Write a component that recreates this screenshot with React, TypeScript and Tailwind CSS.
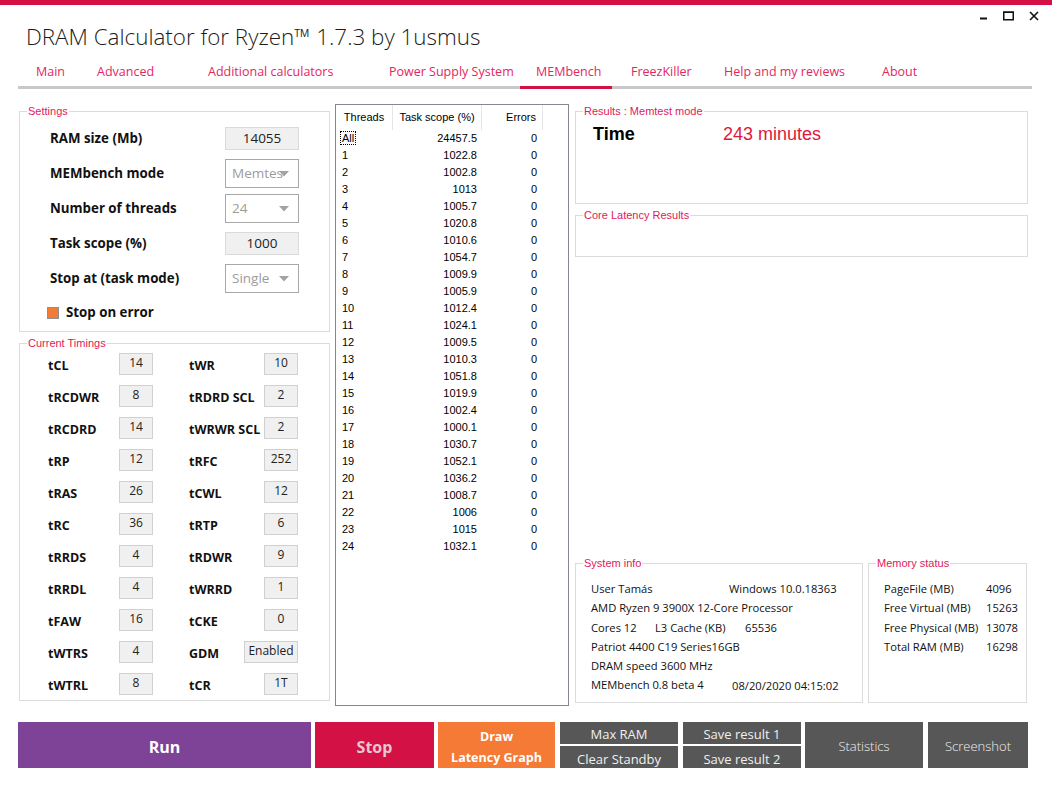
import React from "react";

const seg = "font-['Open_Sans',sans-serif]";
const ms = "font-['Liberation_Sans',Arial,sans-serif]";

const tabs = [
  { name: "Main", w: 61 },
  { name: "Advanced", w: 111 },
  { name: "Additional calculators", w: 181 },
  { name: "Power Supply System", w: 147 },
  { name: "MEMbench", w: 95 },
  { name: "FreezKiller", w: 93 },
  { name: "Help and my reviews", w: 158 },
  { name: "About", w: 60 },
];

const settingsRows = [
  { label: "RAM size (Mb)", kind: "input", value: "14055" },
  { label: "MEMbench mode", kind: "select", value: "Memtes" },
  { label: "Number of threads", kind: "select", value: "24" },
  { label: "Task scope (%)", kind: "input", value: "1000" },
  { label: "Stop at (task mode)", kind: "select", value: "Single" },
];

const timings: [string, string, string, string][] = [
  ["tCL", "14", "tWR", "10"],
  ["tRCDWR", "8", "tRDRD SCL", "2"],
  ["tRCDRD", "14", "tWRWR SCL", "2"],
  ["tRP", "12", "tRFC", "252"],
  ["tRAS", "26", "tCWL", "12"],
  ["tRC", "36", "tRTP", "6"],
  ["tRRDS", "4", "tRDWR", "9"],
  ["tRRDL", "4", "tWRRD", "1"],
  ["tFAW", "16", "tCKE", "0"],
  ["tWTRS", "4", "GDM", "Enabled"],
  ["tWTRL", "8", "tCR", "1T"],
];

const threads = [
  ["All", "24457.5"],
  ["1", "1022.8"],
  ["2", "1002.8"],
  ["3", "1013"],
  ["4", "1005.7"],
  ["5", "1020.8"],
  ["6", "1010.6"],
  ["7", "1054.7"],
  ["8", "1009.9"],
  ["9", "1005.9"],
  ["10", "1012.4"],
  ["11", "1024.1"],
  ["12", "1009.5"],
  ["13", "1010.3"],
  ["14", "1051.8"],
  ["15", "1019.9"],
  ["16", "1002.4"],
  ["17", "1000.1"],
  ["18", "1030.7"],
  ["19", "1052.1"],
  ["20", "1036.2"],
  ["21", "1008.7"],
  ["22", "1006"],
  ["23", "1015"],
  ["24", "1032.1"],
];

const memStatus = [
  ["PageFile (MB)", "4096"],
  ["Free Virtual (MB)", "15263"],
  ["Free Physical (MB)", "13078"],
  ["Total RAM (MB)", "16298"],
];

function Group({ title, className, children }: { title: string; className?: string; children?: React.ReactNode }) {
  return (
    <fieldset className={`border border-[#dcdcdc] ${className ?? ""}`}>
      <legend className={`ml-[7px] px-[1px] text-[11px] leading-[14px] text-[#e2185b] ${ms}`}>{title}</legend>
      {children}
    </fieldset>
  );
}

function Arrow() {
  return (
    <svg width="10" height="6" viewBox="0 0 10 6" className="absolute right-[9px] top-[11px]">
      <path d="M0 0 H10 L5 5.5 Z" fill="#a2a2a2" />
    </svg>
  );
}

function WindowControls() {
  return (
    <div className="absolute top-[11px] right-[13px] flex items-start gap-[15px]">
      <svg width="9" height="10" viewBox="0 0 9 10">
        <rect x="1" y="6.5" width="7" height="2" fill="#111" />
      </svg>
      <svg width="11" height="10" viewBox="0 0 11 10">
        <rect x="0.75" y="1.25" width="9.5" height="7.5" fill="none" stroke="#111" strokeWidth="1.5" />
        <rect x="0" y="0.5" width="11" height="1.5" fill="#111" />
      </svg>
      <svg width="10" height="10" viewBox="0 0 10 10">
        <path d="M1 1 L9 9 M9 1 L1 9" stroke="#111" strokeWidth="1.6" />
      </svg>
    </div>
  );
}

const grayBtn = "bg-[#575757] text-[#f0f0f0] text-[13px]";

export default function App() {
  return (
    <div className={`relative w-[1052px] h-[791px] bg-white overflow-hidden ${seg}`}>
      <div className="h-[5px] bg-[#d31145]" />
      <WindowControls />

      <div className="pl-[26px] pt-[17px] text-[22.4px] font-light leading-[30px] text-[#1b1b1b]">
        DRAM Calculator for Ryzen™ 1.7.3 by 1usmus
      </div>

      <div className="mt-[12px] pl-[36px] flex text-[12.5px] leading-[16px] text-[#e3265f]">
        {tabs.map((t) => (
          <div key={t.name} style={{ width: t.w }} className="shrink-0 whitespace-nowrap">
            {t.name}
          </div>
        ))}
      </div>

      <div className="mt-[6px] ml-[18px] flex h-[3px]">
        <div className="w-[502px] bg-[#c8c8c8]" />
        <div className="w-[92px] bg-[#d31145]" />
        <div className="w-[420px] bg-[#c8c8c8]" />
      </div>

      <div className="mt-[15px] ml-[19px] flex h-[602px]">
        {/* left column */}
        <div className="w-[311px] flex flex-col gap-[4px]">
          <Group title="Settings" className="h-[228px]">
            <div className="pt-[3px] pl-[30px] pr-[30px]">
              {settingsRows.map((r) => (
                <div key={r.label} className="h-[35px] flex items-center justify-between">
                  <span className="text-[13.3px] font-bold text-[#111]">{r.label}</span>
                  {r.kind === "input" ? (
                    <div className="w-[74px] h-[23px] bg-[#f0f0f0] border border-[#dadada] text-center text-[13.5px] leading-[21px] text-[#222]">
                      {r.value}
                    </div>
                  ) : (
                    <div className="relative w-[74px] h-[29px] bg-white border border-[#a8a8a8] overflow-hidden">
                      <span className="pl-[6px] text-[13.5px] leading-[27px] text-[#9c9c9c] whitespace-nowrap">{r.value}</span>
                      <Arrow />
                    </div>
                  )}
                </div>
              ))}
              <div className="h-[33px] flex items-center -ml-[3px] gap-[7px]">
                <div className="w-[12px] h-[12px] border border-[#8f8f8f] bg-[#f47b36]" />
                <span className="text-[13.3px] font-bold text-[#111]">Stop on error</span>
              </div>
            </div>
          </Group>

          <Group title="Current Timings" className="h-[365px]">
            <div className="pl-[28px]">
              {timings.map(([l, lv, r, rv]) => (
                <div key={l} className="h-[32px] flex items-center">
                  <span className="w-[71px] text-[12.5px] font-bold text-[#111] whitespace-nowrap">{l}</span>
                  <div className="w-[34px] h-[22px] mb-[4px] bg-[#f0f0f0] border border-[#d0d0d0] text-center text-[12px] leading-[17px] text-[#222]">
                    {lv}
                  </div>
                  <div className="ml-[36px] w-[109px] flex items-center justify-between">
                    <span className="text-[12.5px] font-bold text-[#111] whitespace-nowrap">{r}</span>
                    <div
                      className={`${rv === "Enabled" ? "w-[54px]" : "w-[34px]"} h-[22px] mb-[4px] bg-[#f0f0f0] border border-[#d0d0d0] text-center text-[12px] leading-[17px] text-[#222]`}
                    >
                      {rv}
                    </div>
                  </div>
                </div>
              ))}
            </div>
          </Group>
        </div>

        {/* thread list */}
        <div className={`ml-[5px] w-[234px] border border-[#828790] bg-white ${ms} text-[11px] text-black`}>
          <div className="flex h-[25px]">
            <div className="w-[57px] text-center leading-[25px] border-r border-[#e5e5e5]">Threads</div>
            <div className="w-[89px] text-center leading-[25px] border-r border-[#e5e5e5]">Task scope (%)</div>
            <div className="w-[61px] text-right pr-[6px] leading-[25px] border-r border-[#e5e5e5]">Errors</div>
          </div>
          {threads.map(([t, v], i) => (
            <div key={t} className="flex h-[17px] leading-[17px]">
              <div className="w-[57px] pl-[5px]">
                <span className={i === 0 ? "outline outline-1 outline-dotted outline-black px-[1px]" : "px-[1px]"}>{t}</span>
              </div>
              <div className="w-[89px] text-right pr-[5px]">{v}</div>
              <div className="w-[61px] text-right pr-[6px]">0</div>
            </div>
          ))}
        </div>

        {/* right column */}
        <div className="ml-[6px] w-[453px] flex flex-col">
          <Group title="Results : Memtest mode" className="h-[100px]">
            <div className={`mt-[5px] pl-[17px] flex text-[18px] leading-[22px] ${ms}`}>
              <span className="w-[130px] font-bold text-black">Time</span>
              <span className="text-[#e1163c]">243 minutes</span>
            </div>
          </Group>
          <Group title="Core Latency Results" className="mt-[4px] h-[49px]" />

          <div className="mt-auto mb-[3px] flex gap-[5px]">
            <Group title="System info" className="w-[288px] h-[147px]">
              <div className="pt-[9px] pl-[15px] text-[11.2px] leading-[19.3px] text-[#111]">
                <div className="flex">
                  <span className="w-[138px]">User Tamás</span>
                  <span>Windows 10.0.18363</span>
                </div>
                <div>AMD Ryzen 9 3900X 12-Core Processor</div>
                <div className="flex">
                  <span className="w-[64px]">Cores 12</span>
                  <span className="w-[90px]">L3 Cache (KB)</span>
                  <span>65536</span>
                </div>
                <div>Patriot 4400 C19 Series16GB</div>
                <div>DRAM speed 3600 MHz</div>
                <div className="flex">
                  <span className="w-[141px]">MEMbench 0.8 beta 4</span>
                  <span className="pt-[1px]">08/20/2020 04:15:02</span>
                </div>
              </div>
            </Group>
            <Group title="Memory status" className="w-[159px] h-[147px]">
              <div className="pt-[9px] pl-[15px] text-[11.2px] leading-[19.3px] text-[#111]">
                {memStatus.map(([k, v]) => (
                  <div key={k} className="flex">
                    <span className="w-[102px] whitespace-nowrap">{k}</span>
                    <span>{v}</span>
                  </div>
                ))}
              </div>
            </Group>
          </div>
        </div>
      </div>

      {/* bottom buttons */}
      <div className="mt-[16px] ml-[18px] flex h-[46px]">
        <button className="w-[293px] pt-[3px] bg-[#7e4396] text-white text-[16px] font-bold">Run</button>
        <button className="ml-[4px] w-[119px] pt-[3px] bg-[#d31145] text-[#e6c6d0] text-[16px] font-bold">Stop</button>
        <button className="ml-[4px] w-[117px] pt-[3px] bg-[#f47a36] text-white text-[12.5px] font-bold leading-[21px]">
          Draw
          <br />
          Latency Graph
        </button>
        <div className="ml-[5px] w-[118px] flex flex-col justify-between">
          <button className={`h-[22px] pt-[3px] ${grayBtn}`}>Max RAM</button>
          <button className={`h-[22px] pt-[4px] ${grayBtn}`}>Clear Standby</button>
        </div>
        <div className="ml-[5px] w-[118px] flex flex-col justify-between">
          <button className={`h-[22px] pt-[3px] ${grayBtn}`}>Save result 1</button>
          <button className={`h-[22px] pt-[4px] ${grayBtn}`}>Save result 2</button>
        </div>
        <button className={`ml-[4px] w-[118px] pt-[3px] font-light ${grayBtn}`}>Statistics</button>
        <button className={`ml-[5px] w-[100px] pt-[3px] font-light ${grayBtn}`}>Screenshot</button>
      </div>
    </div>
  );
}
